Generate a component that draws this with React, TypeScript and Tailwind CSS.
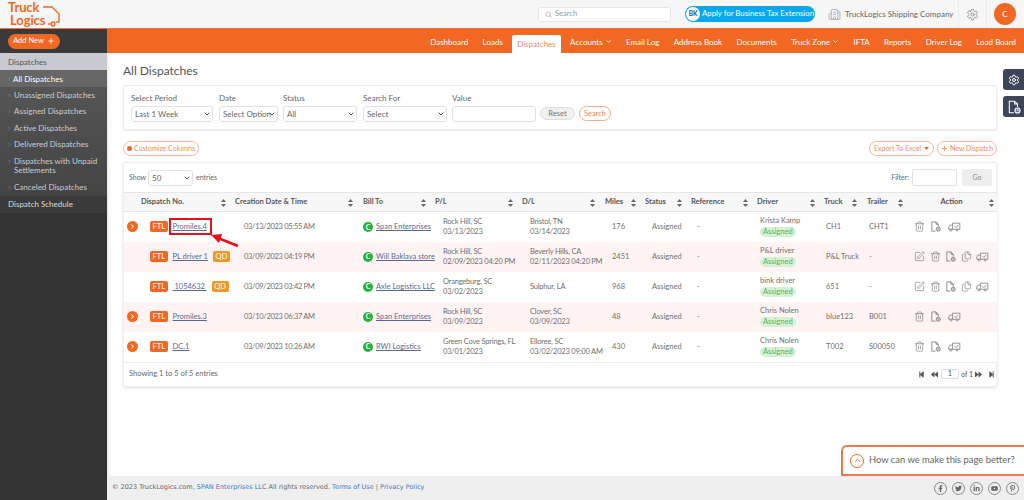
import React from "react";
import { Search, Settings, Building2, Plus, ChevronDown, ChevronRight, ChevronUp, Trash2, SquarePen, Files } from "lucide-react";
import { FaFacebookF, FaTwitter, FaLinkedinIn, FaYoutube, FaPinterestP, FaStepBackward, FaBackward, FaForward, FaStepForward } from "react-icons/fa";

const F = { fontFamily: '"Lato","Noto Sans",sans-serif' };

function TruckCheck() {
  return (
    <svg width="13" height="10" viewBox="0 0 17 13" fill="none" stroke="#777" strokeWidth="1">
      <path d="M6 1.5h9.5v8H6z" />
      <path d="M6 4H2.5L1 6.5v3h5" />
      <path d="M8.5 5.5l1.8 1.8 3-3.5" />
      <circle cx="4" cy="10.5" r="1.3" fill="#fff" />
      <circle cx="12" cy="10.5" r="1.3" fill="#fff" />
    </svg>
  );
}

function PageClock({ color = "#777", size = 11 }: { color?: string; size?: number }) {
  return (
    <svg width={size} height={size} viewBox="0 0 12 12" fill="none" stroke={color} strokeWidth="0.9" className="shrink-0">
      <path d="M6 11H2V1h4.5L9 3.5V6" />
      <path d="M6.5 1v2.5H9" />
      <circle cx="9" cy="9" r="2.2" fill={color} fillOpacity="0.25" />
      <path d="M9 8v1h1" strokeWidth="0.7" />
    </svg>
  );
}

function Sort() {
  return (
    <svg className="absolute right-[3px] top-[6px]" width="5" height="8" viewBox="0 0 5 8" fill="#666">
      <path d="M2.5 0L5 3H0z" />
      <path d="M2.5 8L5 5H0z" />
    </svg>
  );
}

function Actions({ full }: { full?: boolean }) {
  const c = "w-[11px] h-[11px] text-[#777] shrink-0";
  return full ? (
    <div className="flex items-center gap-[4.5px]">
      <SquarePen className={c} strokeWidth={1.4} />
      <Trash2 className={c} strokeWidth={1.4} />
      <PageClock />
      <Files className={c} strokeWidth={1.4} />
      <TruckCheck />
    </div>
  ) : (
    <div className="flex items-center gap-[5px]">
      <Trash2 className={c} strokeWidth={1.4} />
      <PageClock />
      <span className="ml-[2px]"><TruckCheck /></span>
    </div>
  );
}

function Badge({ t, c }: { t: string; c: string }) {
  return <span className={`inline-block ${c} text-white text-[7.5px] leading-[11px] px-[2.5px] rounded-[2px]`}>{t}</span>;
}

function Sel({ w, t, cls = "" }: { w: string; t: string; cls?: string }) {
  return (
    <div className={`relative ${w} ${cls}`}>
      <select className="block w-full appearance-none h-[16px] bg-white border border-[#e2e2e2] rounded-[3px] text-[8px] text-[#666] pl-[3px] outline-none">
        <option>{t}</option>
      </select>
      <ChevronDown className="absolute right-[2px] top-[4px] w-[8px] h-[8px] text-[#555] pointer-events-none" strokeWidth={3} />
    </div>
  );
}

type Row = { exp: boolean; no: string; boxed?: boolean; qd?: boolean; date: string; bill: string; pl: string[]; dl: string[]; miles: string; driver: string; truck: string; trailer: string; full?: boolean; pink?: boolean };
const rows: Row[] = [
  { exp: true, no: "Promiles.4", boxed: true, date: "03/13/2023 05:55 AM", bill: "Span Enterprises", pl: ["Rock Hill, SC", "03/13/2023"], dl: ["Bristol, TN", "03/14/2023"], miles: "176", driver: "Krista Kamp", truck: "CH1", trailer: "CHT1" },
  { exp: false, no: "PL driver 1", qd: true, date: "03/09/2023 04:19 PM", bill: "Will Baklava store", pl: ["Rock Hill, SC", "02/09/2023 04:20 PM"], dl: ["Beverly Hills, CA", "02/11/2023 04:20 PM"], miles: "2451", driver: "P&L driver", truck: "P&L Truck", trailer: "-", full: true, pink: true },
  { exp: false, no: "\u00a01054632\u00a0", qd: true, date: "03/09/2023 03:42 PM", bill: "Axle Logistics LLC", pl: ["Orangeburg, SC", "03/02/2023"], dl: ["Sulphur, LA"], miles: "968", driver: "bink driver", truck: "651", trailer: "-", full: true },
  { exp: true, no: "Promiles.3", date: "03/10/2023 06:37 AM", bill: "Span Enterprises", pl: ["Rock Hill, SC", "03/09/2023"], dl: ["Clover, SC", "03/09/2023"], miles: "48", driver: "Chris Nolen", truck: "blue123", trailer: "B001", pink: true },
  { exp: true, no: "DC.1", date: "03/09/2023 10:26 AM", bill: "RWI Logistics", pl: ["Green Cove Springs, FL", "03/01/2023"], dl: ["Elloree, SC", "03/02/2023 09:00 AM"], miles: "430", driver: "Chris Nolen", truck: "T002", trailer: "S00050" },
];

const heads: [string, number, number, string?][] = [
  ["Dispatch No.", 105, 17],
  ["Creation Date & Time", 127, 6],
  ["Bill To", 73, 7],
  ["P/L", 87, 6],
  ["D/L", 82, 6],
  ["Miles", 41, 7],
  ["Status", 46, 6],
  ["Reference", 66, 6],
  ["Driver", 67, 6],
  ["Truck", 42, 6],
  ["Trailer", 46, 7],
  ["Action", 91, 0, "center"],
];

const nav: [string, boolean?][] = [["Dashboard"], ["Loads"], ["Dispatches"], ["Accounts", true], ["Email Log"], ["Address Book"], ["Documents"], ["Truck Zone", true], ["IFTA"], ["Reports"], ["Driver Log"], ["Load Board"]];
const side = ["Unassigned Dispatches", "Assigned Dispatches", "Active Dispatches", "Delivered Dispatches", "Dispatches with Unpaid Settlements", "Canceled Dispatches"];

const labelC = "block text-[8px] leading-[12px] text-[#666] mb-[2px]";

export default function App() {
  return (
    <div style={F} className="relative w-[1024px] h-[500px] overflow-hidden flex flex-col bg-white text-[#666]">
      {/* Header */}
      <header className="h-[29px] shrink-0 bg-[#f6f6f6] flex items-center border-b border-[#f2743a]">
        <div className="w-[107px] h-full relative pl-[8px] shrink-0">
          <div className="text-[#f26822] font-bold text-[13px] leading-[13px] pt-px tracking-[-0.1px]">
            <div>Truck</div>
            <div className="pl-[2px]">Logics</div>
          </div>
          <svg className="absolute left-[38px] top-[4px]" width="24" height="23" viewBox="0 0 24 23" fill="none" stroke="#f26822" strokeWidth="1.4" strokeLinejoin="round">
            <path d="M5 3h9l7 7v8h-3" />
            <path d="M12 20h-2" />
            <circle cx="15" cy="20" r="2" />
          </svg>
        </div>
        <div className="ml-[431px] w-[133px] shrink-0 h-[15px] bg-white border border-[#e6e6e6] rounded-[3px] flex items-center pl-[6px] gap-[3px] text-[7.5px] text-[#999]">
          <Search className="w-[7px] h-[7px]" />
          <span>Search</span>
        </div>
        <div className="ml-[14px] w-[130px] shrink-0 h-[16px] rounded-full bg-[#0aa7ee] flex items-center text-white text-[7.8px] pl-[1px] gap-[2px] whitespace-nowrap">
          <span className="w-[14px] h-[14px] rounded-full bg-white text-[#17508f] text-[6.5px] font-bold flex items-center justify-center">BK</span>
          <span>Apply for Business Tax Extension</span>
        </div>
        <Building2 className="ml-[13px] w-[13px] h-[13px] text-[#8a93a3] shrink-0" strokeWidth={1.2} />
        <span className="ml-[4px] w-[113px] shrink-0 text-[8px] text-[#666] whitespace-nowrap">TruckLogics Shipping Company</span>
        <div className="h-full w-[29px] shrink-0 border-x border-[#ececec] flex items-center justify-center">
          <Settings className="w-[13px] h-[13px] text-[#667]" strokeWidth={1.2} />
        </div>
        <div className="ml-[7px] w-[22px] h-[22px] shrink-0 rounded-full bg-[#f26822] text-white text-[8px] flex items-center justify-center">C</div>
      </header>

      <div className="flex flex-1 min-h-0">
        {/* Sidebar */}
        <aside className="w-[107px] shrink-0 bg-[#333] text-[#ccc] text-[8px] flex flex-col">
          <div className="h-[24px] bg-[#3a3a3a] flex items-center pl-[8px] shrink-0">
            <div className="w-[52px] h-[15px] rounded-full bg-[#f26822] text-white text-[7.5px] flex items-center justify-center gap-[3px] whitespace-nowrap">
              Add New <Plus className="w-[8px] h-[8px]" strokeWidth={2.5} />
            </div>
          </div>
          <div className="h-[17px] bg-[#c9c9d1] text-[#555] flex items-center pl-[8px]">Dispatches</div>
          <div className="h-[17px] bg-[#666] text-white flex items-center pl-[7px]">
            <ChevronRight className="w-[5px] h-[5px] text-[#aaa]" /><span className="ml-[1px]">All Dispatches</span>
          </div>
          <div className="bg-gradient-to-b from-[#555] to-[#444]">
            {side.map((s) => (
              <div key={s} className="flex pl-[7px] py-[3.5px] leading-[9.5px]">
                <ChevronRight className="w-[5px] h-[5px] mt-[2px] shrink-0 text-[#aaa]" />
                <span className="ml-[2px] pr-[6px]">{s}</span>
              </div>
            ))}
          </div>
          <div className="h-[17px] bg-[#3a3a3a] text-[#ddd] flex items-center pl-[8px]">Dispatch Schedule</div>
        </aside>

        <div className="flex-1 min-w-0 flex flex-col">
          {/* Nav */}
          <nav className="h-[24px] shrink-0 bg-[#f26822] flex items-end justify-end pr-[8px] gap-[14.3px] text-white text-[8px]">
            {nav.map(([n, c]) =>
              n === "Dispatches" ? (
                <span key={n} className="h-[18px] bg-white rounded-t-[2px] text-[#f58a5a] px-[5px] -mx-[5px] flex items-center">{n}</span>
              ) : (
                <span key={n} className="h-[23px] flex items-center gap-[2px] whitespace-nowrap">
                  {n}
                  {c && <ChevronDown className="w-[7px] h-[7px]" strokeWidth={3} />}
                </span>
              )
            )}
          </nav>

          {/* Main */}
          <main className="relative flex-1 min-h-0 pl-[16px] pr-[27px] shadow-[inset_4px_0_4px_-3px_rgba(0,0,0,0.12)]">
            <h1 className="text-[12px] leading-[16px] mt-[10px] text-[#555]">All Dispatches</h1>
            <div className="mt-[6px] h-[45px] border border-[#ececec] rounded-[3px] shadow-[0_1px_2px_rgba(0,0,0,0.08)] flex items-start pl-[7px] pt-[6px] gap-[5px]">
              <div><label className={labelC}>Select Period</label><Sel w="w-[82px]" t="Last 1 Week" /></div>
              <div className="ml-px"><label className={labelC}>Date</label><Sel w="w-[59px]" t="Select Option" /></div>
              <div><label className={labelC}>Status</label><Sel w="w-[74px]" t="All" /></div>
              <div className="ml-px"><label className={labelC}>Search For</label><Sel w="w-[84px]" t="Select" /></div>
              <div><label className={labelC}>Value</label><div className="h-[16px] w-[84px] border border-[#e2e2e2] rounded-[3px]" /></div>
              <div className="flex gap-[4px] pt-[15px] -ml-px">
                <span className="h-[13px] w-[35px] rounded-full bg-[#f0f0f0] border border-[#ddd] text-[7.5px] text-[#777] flex items-center justify-center">Reset</span>
                <span className="h-[15px] -mt-px w-[32px] rounded-full border border-[#f5a98a] text-[7.5px] text-[#f58a5a] flex items-center justify-center">Search</span>
              </div>
            </div>

            <div className="mt-[11px] flex justify-between h-[15px] text-[7px] text-[#f58a5a] whitespace-nowrap">
              <span className="w-[76px] rounded-full border border-[#f5b79f] flex items-center justify-center gap-[2px]">
                <span className="w-[5px] h-[5px] rounded-full bg-[#f26822]" /> Customize Columns
              </span>
              <div className="flex gap-[3px]">
                <span className="w-[65px] rounded-full border border-[#f5b79f] flex items-center justify-center gap-[3px]">
                  Export To Excel
                  <svg width="5" height="3" viewBox="0 0 5 3" fill="#f26822"><path d="M0 0h5L2.5 3z" /></svg>
                </span>
                <span className="w-[60px] rounded-full border border-[#f5b79f] flex items-center justify-center gap-[2px]"><Plus className="w-[7px] h-[7px]" strokeWidth={3} /> New Dispatch</span>
              </div>
            </div>

            <section className="mt-[6px] w-[874px] border border-[#eee] rounded-[2px] shadow-[0_1px_3px_rgba(0,0,0,0.12)]">
              <div className="h-[29px] flex items-center pl-[5px] text-[7px] text-[#666]">
                <span>Show</span>
                <Sel w="w-[45px]" t="50" cls="ml-[2px]" />
                <span className="ml-[3px]">entries</span>
                <span className="ml-auto">Filter:</span>
                <div className="ml-[3px] w-[45px] h-[17px] border border-[#e2e2e2] rounded-[2px]" />
                <span className="ml-[5px] mr-[4px] w-[30px] h-[17px] bg-[#eee] rounded-[2px] flex items-center justify-center text-[#888]">Go</span>
              </div>
              <table className="w-full table-fixed border-collapse text-[7.5px] text-[#707070]">
                <colgroup>{heads.map(([h, w]) => <col key={h} style={{ width: w }} />)}</colgroup>
                <thead>
                  <tr className="h-[19px] bg-[#f7f7f7] border-y border-[#e6e6e6]">
                    {heads.map(([h, , p, a]) => (
                      <th key={h} className="relative font-bold text-[7.5px] text-[#555] text-left whitespace-nowrap" style={{ paddingLeft: p, textAlign: a === "center" ? "center" : "left" }}>
                        {h}
                        <Sort />
                      </th>
                    ))}
                  </tr>
                </thead>
                <tbody>
                  {rows.map((r) => (
                    <tr key={r.no + r.date} className={`h-[30px] ${r.pink ? "bg-[#fff3f3]" : "bg-white"}`}>
                      <td className="pl-[3px] whitespace-nowrap">
                        <div className="flex items-center">
                          <span className="w-[11px] h-[11px] rounded-full shrink-0 flex items-center justify-center" style={{ background: r.exp ? "#f26822" : "transparent" }}>
                            {r.exp && <ChevronRight className="w-[7px] h-[7px] text-white" strokeWidth={3.5} />}
                          </span>
                          <span className="ml-[12px]"><Badge t="FTL" c="bg-[#f26822]" /></span>
                          {r.boxed ? (
                            <span className="ml-[3px] text-[#56699a] underline outline-2 outline-[#e8101a] pl-[2px] py-[1px] w-[39px]">{r.no}</span>
                          ) : (
                            <span className="ml-[5px] text-[#56699a] underline">{r.no}</span>
                          )}
                          {r.qd && <span className="ml-[5px]"><Badge t="QD" c="bg-[#ef9a26]" /></span>}
                        </div>
                      </td>
                      <td className="pl-[15px] whitespace-nowrap tracking-[-0.3px]">{r.date}</td>
                      <td className="pl-[7px] whitespace-nowrap">
                        <div className="flex items-center gap-[3px]">
                          <span className="w-[10px] h-[10px] rounded-full bg-[#22b33a] text-white text-[7px] font-bold flex items-center justify-center shrink-0">C</span>
                          <span className="text-[#56699a] underline">{r.bill}</span>
                        </div>
                      </td>
                      <td className="pl-[14px] whitespace-nowrap leading-[9.5px] tracking-[-0.2px]">{r.pl.map((x) => <div key={x}>{x}</div>)}</td>
                      <td className="pl-[14px] whitespace-nowrap leading-[9.5px] tracking-[-0.2px]">{r.dl.map((x) => <div key={x}>{x}</div>)}</td>
                      <td className="pl-[14px]">{r.miles}</td>
                      <td className="pl-[13px]">Assigned</td>
                      <td className="pl-[12px]">-</td>
                      <td className="pl-[9px] whitespace-nowrap">
                        <div className="leading-[10px]">{r.driver}</div>
                        <span className="inline-block bg-[#d6f0d6] text-[#52b560] rounded-full px-[3px] leading-[10px]">Assigned</span>
                      </td>
                      <td className="pl-[8px] whitespace-nowrap">{r.truck}</td>
                      <td className="pl-[9px]">{r.trailer}</td>
                      <td className="pl-[8px]"><Actions full={r.full} /></td>
                    </tr>
                  ))}
                </tbody>
              </table>
              <div className="h-[24px] border-t border-[#eee] flex items-center pl-[5px] pr-px text-[7.5px]">
                <span>Showing 1 to 5 of 5 entries</span>
                <div className="ml-auto flex items-center text-[#555]">
                  <FaStepBackward className="w-[7px] h-[7px]" />
                  <FaBackward className="w-[7px] h-[7px] ml-[6px]" />
                  <span className="ml-[3px] w-[18px] h-[10px] border border-[#ddd] rounded-[2px] flex items-center justify-center">1</span>
                  <span className="ml-[2px] w-[10px] text-[7px] whitespace-nowrap">of 1</span>
                  <FaForward className="w-[7px] h-[7px] ml-[4px]" />
                  <FaStepForward className="w-[7px] h-[7px] ml-[6px]" />
                </div>
              </div>
            </section>

            {/* annotation arrow */}
            <svg className="absolute left-[102px] top-[180px]" width="36" height="16" viewBox="0 0 36 16">
              <path d="M29 13L9 5" stroke="#e8101a" strokeWidth="2.8" />
              <path d="M2 2l11-1-3 9z" fill="#e8101a" />
            </svg>

            {/* side tabs */}
            <div className="absolute right-0 top-[16px] flex flex-col gap-[6px]">
              <span className="w-[21px] h-[21px] bg-[#3d4559] rounded-l-[3px] flex items-center justify-center"><Settings className="w-[12px] h-[12px] text-white" /></span>
              <span className="w-[21px] h-[21px] bg-[#3d4559] rounded-l-[3px] flex items-center justify-center"><PageClock color="#fff" size={14} /></span>
            </div>

            {/* feedback */}
            <div className="absolute right-0 bottom-0 w-[183px] h-[31px] bg-white border-2 border-r-0 border-[#f07a4a] rounded-tl-[6px] flex items-center pl-[7px] gap-[5px] text-[9.4px] text-[#666] whitespace-nowrap">
              <span className="w-[14px] h-[14px] rounded-full border border-[#f26822] flex items-center justify-center"><ChevronUp className="w-[9px] h-[9px] text-[#f26822]" strokeWidth={2.5} /></span>
              How can we make this page better?
            </div>
          </main>

          {/* Footer */}
          <footer className="h-[24px] shrink-0 bg-[#efefef] flex items-center pl-[5px] pr-[5px] text-[6.5px] text-[#666]" style={{ fontFamily: '"DejaVu Sans",sans-serif' }}>
            <span>© 2023 TruckLogics.com, <span className="text-[#4a75c4]">SPAN Enterprises LLC</span> All rights reserved. <span className="text-[#4a75c4]">Terms of Use</span> | <span className="text-[#4a75c4]">Privacy Policy</span></span>
            <div className="ml-auto flex gap-[5px]">
              {[FaFacebookF, FaTwitter, FaLinkedinIn, FaYoutube, FaPinterestP].map((I, i) => (
                <span key={i} className="w-[13px] h-[13px] rounded-full border border-[#888] flex items-center justify-center"><I className="w-[7px] h-[7px] text-[#666]" /></span>
              ))}
            </div>
          </footer>
        </div>
      </div>
    </div>
  );
}
